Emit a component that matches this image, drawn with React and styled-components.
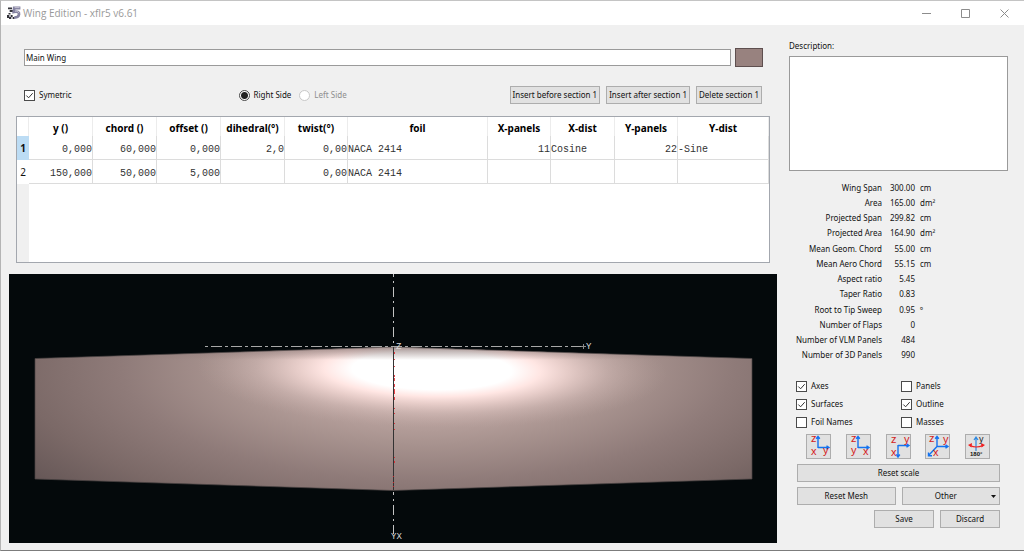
import React, { useState } from 'react';
import styled, { createGlobalStyle } from 'styled-components';

const GlobalStyle = createGlobalStyle`
  * {
    box-sizing: border-box;
  }
  body {
    margin: 0;
    background: #f0f0f0;
    color: #111;
    font-family: "Noto Sans", sans-serif;
    font-size: 8px;
    line-height: 12px;
  }
  button, input, select, textarea {
    font: inherit;
    color: inherit;
    margin: 0;
  }
`;

const Window = styled.div`
  display: flex;
  flex-direction: column;
  min-height: 100vh;
  border-top: 1px solid #c4c4c4;
  border-left: 1px solid #b4b4b4;
  border-bottom: 1px solid #7c7c7c;
`;

const TitleBar = styled.header`
  display: flex;
  align-items: center;
  height: 24px;
  padding-left: 6px;
  background: #fff;
`;

const Title = styled.h1`
  flex: 1;
  margin: 0 0 0 2px;
  font: 400 10px/16px "Open Sans", sans-serif;
  color: #999;
`;

const WindowButton = styled.button`
  display: grid;
  place-items: center;
  width: 39px;
  height: 24px;
  padding: 0;
  border: 0;
  background: none;
  color: #8c8c8c;
`;

const Body = styled.main`
  display: flex;
  flex: 1;
`;

const LeftPane = styled.section`
  display: flex;
  flex: 1;
  flex-direction: column;
  min-width: 0;
  padding: 23px 0 7px 8px;
`;

const NameRow = styled.div`
  display: flex;
  align-items: center;
  gap: 4px;
  padding: 0 14px 0 15px;
`;

const NameInput = styled.input`
  flex: 1;
  min-width: 0;
  height: 17px;
  padding: 0 1px;
  border: 1px solid #9a9a9a;
  background: #fff;
`;

const ColorButton = styled.button`
  width: 28px;
  height: 19px;
  padding: 0;
  border: 1px solid #5e4f4f;
  background: #98827f;
`;

const OptionRow = styled.div`
  display: flex;
  align-items: center;
  gap: 6px;
  margin-top: 19px;
  padding: 0 15px;
`;

const Spread = styled.div`
  flex: ${(props) => props.$grow} 0 0;
  display: flex;
  gap: 8px;
`;

const Label = styled.label`
  display: flex;
  align-items: center;
  gap: 4px;
  white-space: nowrap;
  color: ${(props) => (props.$off ? '#8e8e8e' : 'inherit')};
`;

const CheckInput = styled.input`
  appearance: none;
  width: 11px;
  height: 11px;
  border: 1px solid #4a4a4a;
  background: #fff;

  &:checked {
    background: #fff url("data:image/svg+xml,%3Csvg xmlns='http://www.w3.org/2000/svg' viewBox='0 0 9 9'%3E%3Cpath d='M1.3 4.5 3.6 6.8 7.7 2.2' fill='none' stroke='%23333'/%3E%3C/svg%3E");
  }
`;

const RadioInput = styled.input`
  appearance: none;
  width: 11px;
  height: 11px;
  border: 1px solid #4a4a4a;
  border-radius: 50%;
  background: #fff;

  &:checked {
    background: radial-gradient(circle, #222 3px, #fff 4px);
  }
  &:disabled {
    border-color: #c8c8c8;
  }
`;

const Button = styled.button`
  height: 18px;
  padding: 0 2px;
  border: 1px solid #adadad;
  background: #e1e1e1;
  white-space: nowrap;
`;

const TableFrame = styled.div`
  height: 147px;
  margin: 12px 7px 0;
  border: 1px solid #a3a7ae;
  background: linear-gradient(to right, #f0f0f0 12px, #fff 12px);
`;

const Table = styled.table`
  width: 100%;
  table-layout: fixed;
  border-collapse: separate;
  border-spacing: 0;
`;

const Col = styled.col`
  width: ${(props) => props.$width};
`;

const HeadCell = styled.th`
  height: 19px;
  padding: 2px 0 0;
  border-right: 1px solid #ececec;
  background: #fff;
  color: #000;
  font: 700 10px/14px "Noto Sans", sans-serif;
`;

const RowHead = styled.th`
  height: 24px;
  padding: 0;
  background: ${(props) => (props.$current ? '#bcdcf4' : '#fff')};
  font: ${(props) => (props.$current ? 700 : 400)} 10px/14px "Noto Sans", sans-serif;
`;

const Cell = styled.td`
  height: 24px;
  padding: 4px 0 0;
  border-right: 1px solid #dcdcdc;
  border-bottom: 1px solid #dcdcdc;
  color: #333;
  font: 10px/14px "Liberation Mono", monospace;
  text-align: ${(props) => (props.$text ? 'left' : 'right')};
  white-space: nowrap;
`;

const View = styled.svg`
  display: block;
  flex: 1;
  width: 100%;
  min-height: 200px;
  margin-top: 11px;
  background: #04090b;
`;

const RightPane = styled.aside`
  display: flex;
  flex-direction: column;
  width: 247px;
  padding: 15px 16px 22px 12px;
`;

const Description = styled.textarea`
  display: block;
  width: 100%;
  height: 115px;
  margin-top: 4px;
  border: 1px solid #9a9a9a;
  background: #fff;
  resize: none;
`;

const Stats = styled.dl`
  display: grid;
  flex: 1;
  grid-auto-rows: 1fr;
  align-items: center;
  margin: 9px 0 17px;
`;

const Stat = styled.div`
  display: grid;
  grid-template-columns: 93px 28px 1fr;
  column-gap: 5px;
`;

const StatName = styled.dt`
  text-align: right;
  white-space: nowrap;
`;

const StatValue = styled.dd`
  margin: 0;
  text-align: ${(props) => (props.$unit ? 'left' : 'right')};
`;

const Checks = styled.div`
  display: grid;
  grid-template-columns: 105px 1fr;
  row-gap: 6px;
  padding: 0 7px;
`;

const Controls = styled.div`
  display: flex;
  flex-direction: column;
  gap: 5px;
  padding: 6px 8px 0;
`;

const ButtonRow = styled.div`
  display: grid;
  grid-template-columns: ${(props) => props.$columns};
  justify-content: end;
  gap: 6px;
`;

const IconRow = styled.div`
  display: flex;
  justify-content: space-between;
  padding: 0 10px 0 9px;
`;

const IconButton = styled.button`
  width: 25px;
  height: 25px;
  padding: 0;
  border: 1px solid #adadad;
  background: #e1e1e1;

  svg {
    display: block;
    overflow: visible;
  }
`;

const OtherBox = styled.div`
  display: grid;
  align-items: center;

  select,
  svg {
    grid-area: 1 / 1;
  }
  svg {
    justify-self: end;
    margin-right: 4px;
    pointer-events: none;
  }
`;

const OtherSelect = styled.select`
  appearance: none;
  width: 100%;
  height: 18px;
  padding: 0 10px 0 0;
  border: 1px solid #adadad;
  border-radius: 0;
  background: #e1e1e1;
  text-align: center;
  text-align-last: center;
`;

const columns = [
  { name: 'y ()', width: '64px' },
  { name: 'chord ()', width: '64px' },
  { name: 'offset ()', width: '64px' },
  { name: 'dihedral(°)', width: '64px' },
  { name: 'twist(°)', width: '63px' },
  { name: 'foil', width: '140px', text: true },
  { name: 'X-panels', width: '63px' },
  { name: 'X-dist', width: '64px', text: true },
  { name: 'Y-panels', width: '63px' },
  { name: 'Y-dist', width: 'auto', text: true },
];

const sections = [
  ['0,000', '60,000', '0,000', '2,0', '0,00', 'NACA 2414', '11', 'Cosine', '22', '-Sine'],
  ['150,000', '50,000', '5,000', '', '0,00', 'NACA 2414', '', '', '', ''],
];

const stats = [
  ['Wing Span', '300.00', 'cm'],
  ['Area', '165.00', 'dm²'],
  ['Projected Span', '299.82', 'cm'],
  ['Projected Area', '164.90', 'dm²'],
  ['Mean Geom. Chord', '55.00', 'cm'],
  ['Mean Aero Chord', '55.15', 'cm'],
  ['Aspect ratio', '5.45', ''],
  ['Taper Ratio', '0.83', ''],
  ['Root to Tip Sweep', '0.95', 'º'],
  ['Number of Flaps', '0', ''],
  ['Number of VLM Panels', '484', ''],
  ['Number of 3D Panels', '990', ''],
];

const displayOptions = ['Axes', 'Panels', 'Surfaces', 'Outline', 'Foil Names', 'Masses'];

// axis triads for the view buttons: blue arrows and red letters
const views = [
  {
    name: 'Front view',
    path: 'M11 13V2M11 12.5H21M9.2 3.8 11 1.5 12.8 3.8M19.5 10.7 22 12.5 19.5 14.3',
    letters: [['z', 4, 7], ['x', 4, 20], ['y', 16, 19]],
  },
  {
    name: 'Side view',
    path: 'M11 13V2M11 12.5H21M9.2 3.8 11 1.5 12.8 3.8M19.5 10.7 22 12.5 19.5 14.3',
    letters: [['z', 4, 7], ['y', 4, 19], ['x', 16, 20]],
  },
  {
    name: 'Top view',
    path: 'M11 10V21M11 10.5H21M9.2 19.5 11 22 12.8 19.5M19.5 8.7 22 10.5 19.5 12.3',
    letters: [['z', 4, 8], ['y', 17, 8], ['x', 4, 21]],
  },
  {
    name: 'Isometric view',
    path: 'M11 12V2M11 11.5H21M11 11.5 2.5 20.5M9.2 3.8 11 1.5 12.8 3.8M19.5 9.7 22 11.5 19.5 13.3M2.5 17.5V20.8H6',
    letters: [['z', 3, 7], ['y', 17, 8], ['x', 7, 21]],
  },
];

function Logo() {
  return (
    <svg width="14" height="14" viewBox="0 0 14 14" aria-hidden="true">
      <path d="M1 1.5h4v1.8H1zM3 4h3v2H3zM1.5 7h2v1.6h-2zM0 9h2v3H0zM3.6 9h2v2h-2zM2 11h2v2H2zM5.6 11h2v2h-2z" fill="#34343a" />
      <path d="M2 4h1v2H2zM2 9h1.6v2H2zM4 11h1.6v1.8H4z" fill="#b9b8c2" />
      <path d="M13.4 2H7.2L6.8 6c3.6-.9 5.6.2 5.2 2.4-.3 2.3-2.4 3.4-4.8 2.9" fill="none" stroke="#8482a0" strokeWidth="2.8" />
      <path d="M12.5 1.6H7.6M8 5.2c2.4-.2 3.6.6 3.8 1.8" fill="none" stroke="#c9c7d6" strokeWidth=".9" />
    </svg>
  );
}

function ViewIcon({ path, letters }) {
  return (
    <svg width="23" height="23" viewBox="0 0 23 23" aria-hidden="true">
      <path d={path} fill="none" stroke="#1473f0" strokeWidth="1.4" />
      {letters.map(([letter, x, y]) => (
        <text key={letter} x={x} y={y} fill="#d42020" fontFamily="Liberation Sans, sans-serif" fontSize="11">
          {letter}
        </text>
      ))}
    </svg>
  );
}

function FlipIcon() {
  return (
    <svg width="23" height="23" viewBox="0 0 23 23" aria-hidden="true">
      <path d="M10 16V3M8 5 10 2 12 5" fill="none" stroke="#2b87e0" strokeWidth="1.2" />
      <path d="M4 10.5Q10 13.5 17 10.5" fill="none" stroke="#f02020" strokeWidth="1.2" />
      <path d="M2 10 6 8 5.5 12.5ZM19 10 15 8 15.5 12.5Z" fill="#f02020" />
      <text x="13" y="7" fontFamily="Liberation Sans, sans-serif" fontSize="9" fill="#222">y</text>
      <text x="4" y="21" fontFamily="Liberation Sans, sans-serif" fontSize="6" fontWeight="700" fill="#111">180°</text>
    </svg>
  );
}

function WingView() {
  const outline = 'M26 84.5 384 73 743 84.5V205L384 216.5 26 205Z';
  return (
    <View viewBox="0 0 768 269" preserveAspectRatio="xMidYMid meet" role="img" aria-label="Wing top view">
      <defs>
        <radialGradient id="body" gradientUnits="userSpaceOnUse" cx="0" cy="0" r="1" gradientTransform="translate(418 94) scale(510 188)">
          <stop offset="0" stopColor="#d2bbb8" />
          <stop offset=".2" stopColor="#c3aba7" />
          <stop offset=".4" stopColor="#a8938f" />
          <stop offset=".6" stopColor="#8f7b79" />
          <stop offset=".8" stopColor="#7b6967" />
          <stop offset="1" stopColor="#625454" />
        </radialGradient>
        <radialGradient id="shine" gradientUnits="userSpaceOnUse" cx="0" cy="0" r="1" gradientTransform="translate(423 96) rotate(1) scale(235 58)">
          <stop offset="0" stopColor="#fff" />
          <stop offset=".34" stopColor="#fff" />
          <stop offset=".46" stopColor="#ffe6e3" />
          <stop offset=".58" stopColor="#f4d9d5" stopOpacity=".75" />
          <stop offset=".75" stopColor="#e2c9c5" stopOpacity=".35" />
          <stop offset="1" stopColor="#c3aba7" stopOpacity="0" />
        </radialGradient>
        <linearGradient id="edge" x1="0" y1="73" x2="0" y2="86" gradientUnits="userSpaceOnUse">
          <stop offset="0" stopColor="#8f7b79" stopOpacity=".8" />
          <stop offset="1" stopColor="#8f7b79" stopOpacity="0" />
        </linearGradient>
      </defs>
      <path d={outline} fill="url(#body)" />
      <path d={outline} fill="url(#shine)" />
      <path d={outline} fill="url(#edge)" />
      <path d={outline} fill="none" stroke="#4b4343" strokeWidth=".7" />
      <path d="M384.5 73V216" stroke="#333" />
      <path
        d="M385.5 78v2M385.5 85v1M385.5 92v1M385.5 101v2M385.5 104v3M385.5 110v3M385.5 115v5M385.5 123v3M385.5 134v1M385.5 139v1M385.5 149v1M385.5 155v1M385.5 183v1M385.5 187v2M384.5 202v1M384.5 208v1M384.5 212v1"
        stroke="#e81c24"
        strokeOpacity=".8"
      />
      <path d="M384.5 0V72M384.5 218V260" stroke="#c4c4c4" strokeDasharray="10 4 2 4" strokeDashoffset="7" />
      <path d="M196 72.5H573" stroke="#a8a8a8" strokeDasharray="3 3 11 3" />
      <path d="M572 72.5h5M574.5 70v5" stroke="#8c8c8c" />
      <g fill="#d8d8d8" fontFamily="Liberation Mono, monospace" fontSize="9">
        <text x="387" y="75">Z</text>
        <text x="577" y="75">Y</text>
        <text x="382" y="265">YX</text>
      </g>
    </View>
  );
}

function Check({ label, defaultChecked }) {
  return (
    <Label>
      <CheckInput type="checkbox" defaultChecked={defaultChecked} />
      {label}
    </Label>
  );
}

function SectionTable() {
  const [current, setCurrent] = useState(0);

  return (
    <TableFrame>
      <Table>
        <colgroup>
          <Col $width="12px" />
          {columns.map((column) => <Col key={column.name} $width={column.width} />)}
        </colgroup>
        <thead>
          <tr>
            <HeadCell />
            {columns.map((column) => <HeadCell key={column.name} scope="col">{column.name}</HeadCell>)}
          </tr>
        </thead>
        <tbody>
          {sections.map((section, row) => (
            <tr key={row} onClick={() => setCurrent(row)}>
              <RowHead scope="row" $current={row === current}>{row + 1}</RowHead>
              {section.map((value, i) => (
                <Cell key={columns[i].name} $text={columns[i].text}>{value}</Cell>
              ))}
            </tr>
          ))}
        </tbody>
      </Table>
    </TableFrame>
  );
}

function App() {
  const [name, setName] = useState('Main Wing');

  return (
    <>
      <GlobalStyle />
      <Window>
        <TitleBar>
          <Logo />
          <Title>Wing Edition - xflr5 v6.61</Title>
          <WindowButton aria-label="Minimize">
            <svg width="9" height="9"><path d="M0 4.5h9" stroke="currentColor" /></svg>
          </WindowButton>
          <WindowButton aria-label="Maximize">
            <svg width="9" height="9"><path d="M.5.5h8v8h-8z" fill="none" stroke="currentColor" /></svg>
          </WindowButton>
          <WindowButton aria-label="Close">
            <svg width="9" height="9"><path d="M.5.5l8 8M8.5.5l-8 8" stroke="currentColor" /></svg>
          </WindowButton>
        </TitleBar>
        <Body>
          <LeftPane>
            <NameRow>
              <NameInput aria-label="Wing name" value={name} onChange={(e) => setName(e.target.value)} />
              <ColorButton aria-label="Wing color" />
            </NameRow>
            <OptionRow>
              <Spread $grow="207">
                <Check label="Symetric" defaultChecked />
              </Spread>
              <Spread $grow="263">
                <Label>
                  <RadioInput type="radio" name="side" defaultChecked />
                  Right Side
                </Label>
                <Label $off>
                  <RadioInput type="radio" name="side" disabled />
                  Left Side
                </Label>
              </Spread>
              <Button>Insert before section 1</Button>
              <Button>Insert after section 1</Button>
              <Button>Delete section 1</Button>
            </OptionRow>
            <SectionTable />
            <WingView />
          </LeftPane>
          <RightPane>
            <label htmlFor="description">Description:</label>
            <Description id="description" />
            <Stats>
              {stats.map(([label, value, unit]) => (
                <Stat key={label}>
                  <StatName>{label}</StatName>
                  <StatValue>{value}</StatValue>
                  <StatValue $unit>{unit}</StatValue>
                </Stat>
              ))}
            </Stats>
            <Checks>
              {displayOptions.map((option) => (
                <Check
                  key={option}
                  label={option}
                  defaultChecked={['Axes', 'Surfaces', 'Outline'].includes(option)}
                />
              ))}
            </Checks>
            <Controls>
              <IconRow>
                {views.map((view) => (
                  <IconButton key={view.name} aria-label={view.name}>
                    <ViewIcon path={view.path} letters={view.letters} />
                  </IconButton>
                ))}
                <IconButton aria-label="Flip view">
                  <FlipIcon />
                </IconButton>
              </IconRow>
              <Button>Reset scale</Button>
              <ButtonRow $columns="1fr 1fr">
                <Button>Reset Mesh</Button>
                <OtherBox>
                  <OtherSelect aria-label="Other actions">
                    <option>Other</option>
                  </OtherSelect>
                  <svg width="5" height="3" aria-hidden="true"><path d="M0 0h5L2.5 3z" fill="#111" /></svg>
                </OtherBox>
              </ButtonRow>
              <ButtonRow $columns="60px 60px">
                <Button>Save</Button>
                <Button>Discard</Button>
              </ButtonRow>
            </Controls>
          </RightPane>
        </Body>
      </Window>
    </>
  );
}

export default App;
